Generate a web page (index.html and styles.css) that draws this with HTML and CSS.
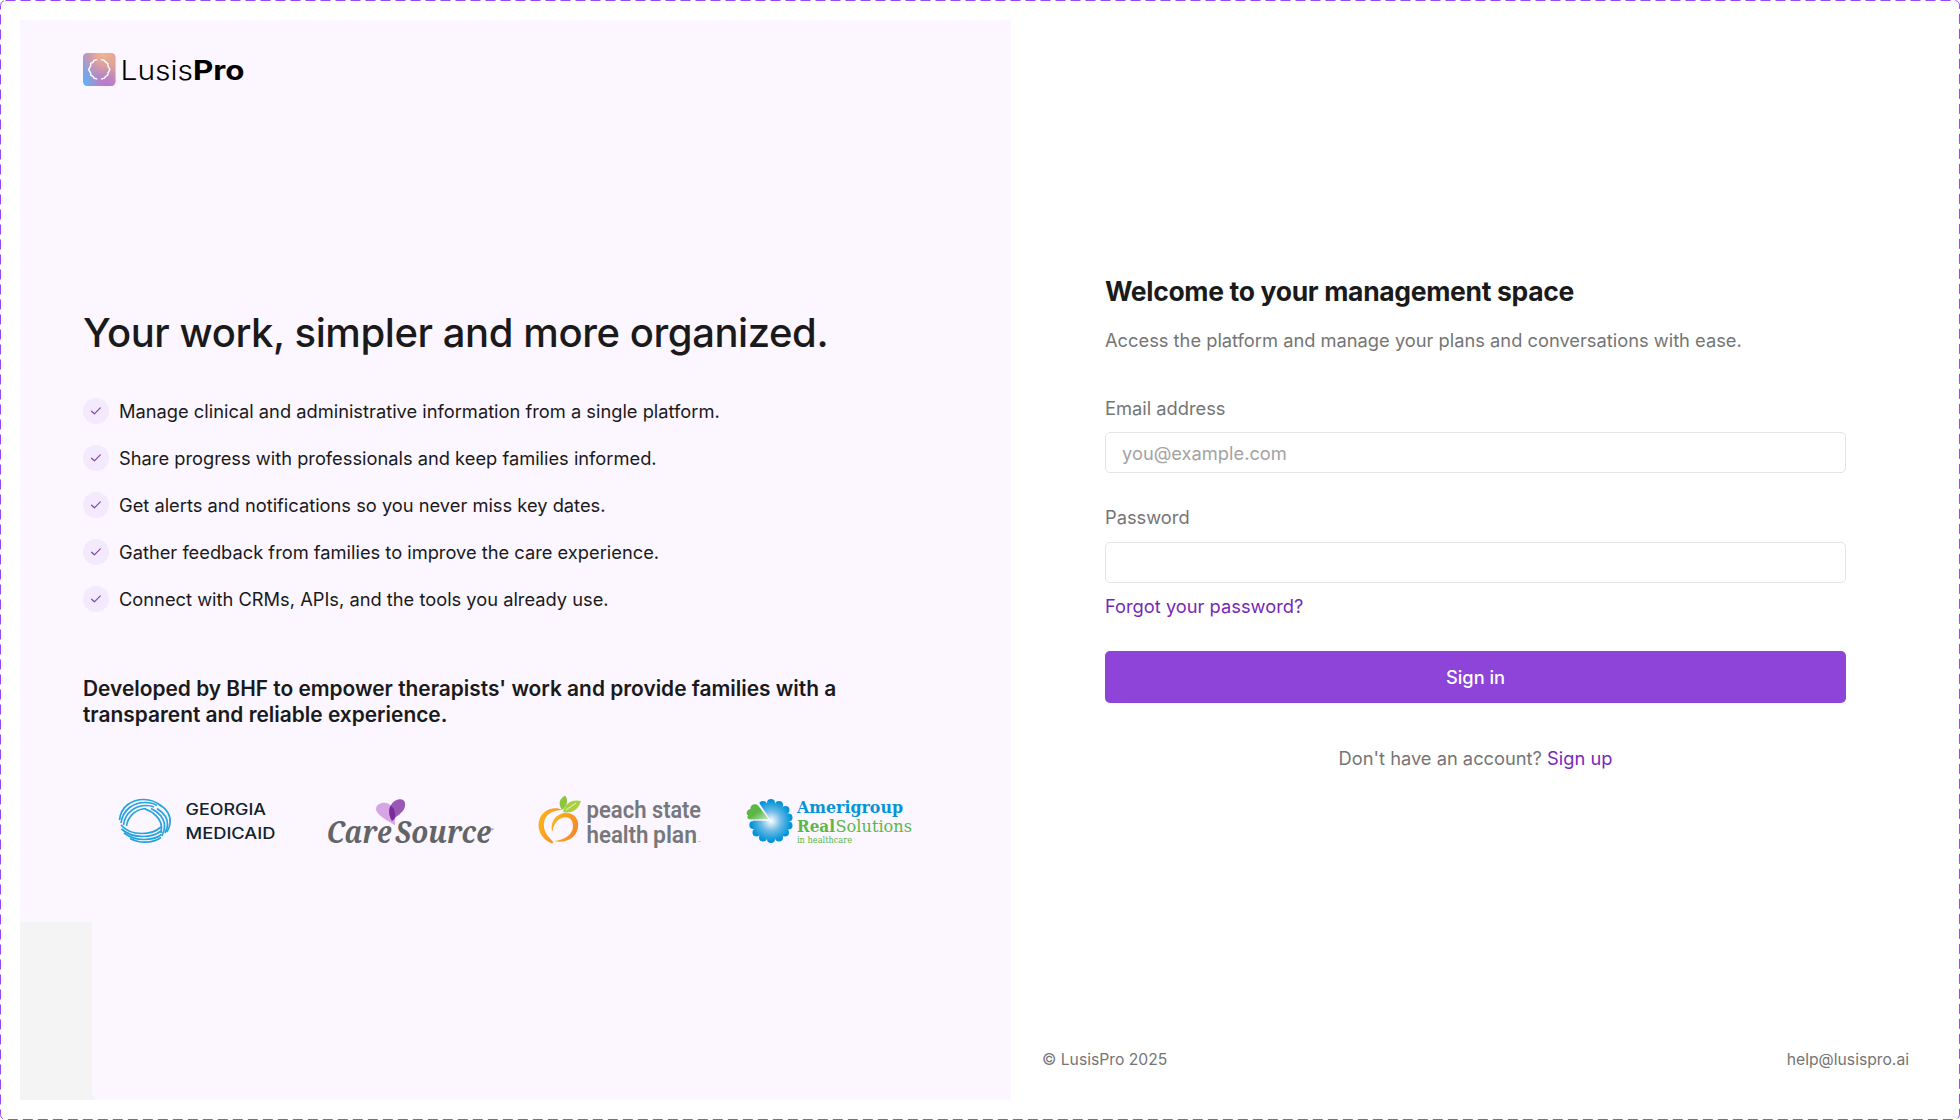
FILE: index.html
```html
<!DOCTYPE html>
<html lang="en">
<head>
  <meta charset="UTF-8">
  <meta name="viewport" content="width=device-width, initial-scale=1.0">
  <title>LusisPro - Sign in</title>
  <link rel="stylesheet" href="styles.css">
</head>
<body>
  <svg class="frame" width="1960" height="1120">
    <rect x="0.5" y="0.5" width="1959" height="1119" rx="5" />
  </svg>

  <div class="page">
    <section class="intro">
      <svg class="brand" width="164" height="34" viewBox="0 0 164 34" role="img" aria-label="LusisPro">
        <defs>
          <linearGradient id="brandBase" x1="0" y1="0.8" x2="1" y2="0.3">
            <stop offset="0" stop-color="#62aef5" />
            <stop offset="0.45" stop-color="#b78bc4" />
            <stop offset="1" stop-color="#dfa094" />
          </linearGradient>
          <radialGradient id="brandTop" cx="0.6" cy="0" r="0.75">
            <stop offset="0" stop-color="#f3b98d" />
            <stop offset="1" stop-color="#e6a392" stop-opacity="0" />
          </radialGradient>
          <radialGradient id="brandBottom" cx="0.75" cy="1" r="0.6">
            <stop offset="0" stop-color="#b878cf" />
            <stop offset="1" stop-color="#b878cf" stop-opacity="0" />
          </radialGradient>
        </defs>
        <rect y="0" width="32.5" height="33" rx="4.5" fill="url(#brandBase)" />
        <rect y="0" width="32.5" height="33" rx="4.5" fill="url(#brandTop)" />
        <rect y="0" width="32.5" height="33" rx="4.5" fill="url(#brandBottom)" />
        <path class="brand-ring" d="M14.3 6.6 L11 7.4 L10 9.2 L7.7 10.4 L7.6 13 L5.6 16.4 L7.6 20 L7.7 22 L10 23.4 L11 25.2 L14.3 26.2" />
        <path class="brand-ring" d="M18 6.6 L21.4 7.4 L22.6 9.2 L24.8 10.4 L25 13 L26.9 16.4 L25 20 L24.8 22 L22.6 23.4 L21.4 25.2 L18 26.2" />
        <text class="brand-light" x="37.5" y="27" textLength="72.5" lengthAdjust="spacingAndGlyphs">Lusis</text>
        <text class="brand-bold" x="110" y="27" textLength="51.5" lengthAdjust="spacingAndGlyphs">Pro</text>
      </svg>

      <h1>Your work, simpler and more organized.</h1>

      <ul class="features">
        <li><span class="check"><svg width="10" height="8" viewBox="0 0 10 8"><path d="M0.6 4.2 L3.4 6.8 L9.3 0.9" /></svg></span>Manage clinical and administrative information from a single platform.</li>
        <li><span class="check"><svg width="10" height="8" viewBox="0 0 10 8"><path d="M0.6 4.2 L3.4 6.8 L9.3 0.9" /></svg></span>Share progress with professionals and keep families informed.</li>
        <li><span class="check"><svg width="10" height="8" viewBox="0 0 10 8"><path d="M0.6 4.2 L3.4 6.8 L9.3 0.9" /></svg></span>Get alerts and notifications so you never miss key dates.</li>
        <li><span class="check"><svg width="10" height="8" viewBox="0 0 10 8"><path d="M0.6 4.2 L3.4 6.8 L9.3 0.9" /></svg></span>Gather feedback from families to improve the care experience.</li>
        <li><span class="check"><svg width="10" height="8" viewBox="0 0 10 8"><path d="M0.6 4.2 L3.4 6.8 L9.3 0.9" /></svg></span>Connect with CRMs, APIs, and the tools you already use.</li>
      </ul>

      <p class="developed">Developed by BHF to empower therapists' work and provide families with a transparent and reliable experience.</p>

      <div class="partners">
        <svg width="160" height="60" viewBox="0 0 160 60" role="img" aria-label="Georgia Medicaid">
          <g class="georgia-rings">
            <path d="M1.5 30 C3 16 14 9.5 26 9.5 C33 9.5 38 11.5 43 16" />
            <path d="M3 33 C5 19 16 12.5 27 12.5 C32 12.5 36 13.5 39 15.5" />
            <path d="M5.5 35 C7 22 18 15.5 28 15.5 C31 15.5 34 16 36 17" />
            <path d="M8.5 36 C10 25 19 19 28 18.5" />
            <path d="M27 19 C36 22 43 29 43.5 37 L43 43" />
            <path d="M33 18.5 C41 22 47 29 46.5 37 C46.5 40 45 43 44 46" />
            <path d="M39 18.5 C46 23 50 28 49.5 35 C49.5 38 48.5 40 47 43" />
            <path d="M42 15 C49 19 53 26 52 33 C51.5 37 50.5 40 48.5 42" />
            <path d="M3 35 C8 41 15 43.5 24 43.5 C32 43.5 38 41.5 43 37" />
            <path d="M3.5 39 C9 44 16 46.5 25 46.5 C33 46.5 38 45 43 41" />
            <path d="M6 43 C12 47.5 18 49.5 26 49.5 C34 49.5 39 48 43.5 44.5" />
            <path d="M12 48.5 C17 51 22 52.3 27 52.2 C34 52 39 50.5 43 47.5" />
          </g>
          <text class="georgia-text" x="67.5" y="25.3" textLength="80.5" lengthAdjust="spacingAndGlyphs">GEORGIA</text>
          <text class="georgia-text" x="67.5" y="49.3" textLength="90" lengthAdjust="spacingAndGlyphs">MEDICAID</text>
        </svg>

        <svg width="170" height="60" viewBox="0 0 170 60" role="img" aria-label="CareSource">
          <path d="M69 35 C64 32 50 25 50 19 C50 12 62 10 66 17 C68 21 69 29 69 35 Z" fill="#d5a6e2" />
          <path d="M66 31 C61 23 63 12 72 9.5 C79 7.5 81 14 77.5 20 C75 24 69 27 66 31 Z" fill="#9a58b5" />
          <path d="M66 31 C62.5 25 62.5 20 64.5 15.5 C69 18 70 25 68.5 29 Z" fill="#792d9b" />
          <text class="care-text" x="0.5" y="53.3" textLength="65" lengthAdjust="spacingAndGlyphs">Care</text>
          <text class="care-text" x="69" y="53.3" textLength="96" lengthAdjust="spacingAndGlyphs">Source</text>
          <text class="care-mark" x="165" y="41">®</text>
        </svg>

        <svg width="170" height="60" viewBox="0 0 170 60" role="img" aria-label="peach state health plan">
          <defs>
            <linearGradient id="peach" x1="0" y1="0" x2="1" y2="0.4">
              <stop offset="0" stop-color="#fdb916" />
              <stop offset="1" stop-color="#f58a2a" />
            </linearGradient>
          </defs>
          <path d="M24 20 C17 15 0.5 20 0.5 35 C0.5 44 7 51 14 53.5 L15.5 52 C9 46 5 40 6 33 C7 24 15 20 24 20 Z" fill="url(#peach)" />
          <path d="M14 41 C12 31 19 23 28 23 C37 23 41 30 40 37 C39 47 29 54 16 51 C26 50 35 45 35 36 C35 30 31 26.5 26 27.5 C20 28.5 16 33 14.5 41 Z" fill="url(#peach)" />
          <path d="M24 20 C20 14 21 9 27 5.5 C31 10 29 16 24 20 Z" fill="#8cc63f" />
          <path d="M25 22 C27 13 34 9 43 11 C40 20 34 24 25 22 Z" fill="#a9d13c" />
          <path class="leaf-vein" d="M28 20 L38 13" />
          <text class="peach-text" x="48.5" y="27.7" textLength="60" lengthAdjust="spacingAndGlyphs">peach</text>
          <text class="peach-text" x="114" y="27.7" textLength="49" lengthAdjust="spacingAndGlyphs">state</text>
          <text class="peach-text" x="48.5" y="53.3" textLength="62" lengthAdjust="spacingAndGlyphs">health</text>
          <text class="peach-text" x="115" y="53.3" textLength="44" lengthAdjust="spacingAndGlyphs">plan</text>
          <text class="peach-mark" x="160" y="53.5">™</text>
        </svg>

        <svg width="170" height="60" viewBox="0 0 170 60" role="img" aria-label="Amerigroup RealSolutions in healthcare">
          <defs>
            <radialGradient id="flower" gradientUnits="userSpaceOnUse" cx="24" cy="31" r="20">
              <stop offset="0" stop-color="#ffffff" />
              <stop offset="0.5" stop-color="#6fbbe6" />
              <stop offset="1" stop-color="#0495d8" />
            </radialGradient>
            <linearGradient id="petal" x1="0" y1="0" x2="1" y2="1">
              <stop offset="0.5" stop-color="#5cb747" />
              <stop offset="1" stop-color="#c5e6bd" />
            </linearGradient>
          </defs>
          <g fill="url(#flower)">
            <circle cx="24" cy="31" r="18" />
            <circle cx="24" cy="13" r="4" />
            <circle cx="32" cy="15" r="4" />
            <circle cx="38.5" cy="20" r="4" />
            <circle cx="41.5" cy="27.5" r="4" />
            <circle cx="41.5" cy="35.5" r="4" />
            <circle cx="38" cy="42.5" r="4" />
            <circle cx="32" cy="47.5" r="4" />
            <circle cx="24" cy="49" r="4" />
            <circle cx="16" cy="47.5" r="4" />
            <circle cx="9.5" cy="42.5" r="4" />
            <circle cx="6.3" cy="35" r="4" />
            <circle cx="16" cy="15" r="4" />
          </g>
          <path d="M24 31 L11.5 12 L-1 16 L-1 30.5 Z" fill="#fbf6ff" />
          <path d="M21.5 29 L11.5 16 C10 13 3 13.5 3.5 19 C-0.5 19.5 -1.5 24 1 25.5 C-0.5 28 1 29.5 4 29.5 Z" fill="url(#petal)" />
          <text class="ameri-text" x="50" y="23.3" textLength="106" lengthAdjust="spacingAndGlyphs">Amerigroup</text>
          <text class="real-text" x="50" y="41.7" textLength="38" lengthAdjust="spacingAndGlyphs">Real</text>
          <text class="solutions-text" x="88.5" y="41.7" textLength="76.5" lengthAdjust="spacingAndGlyphs">Solutions</text>
          <text class="health-text" x="50" y="52.7" textLength="55" lengthAdjust="spacingAndGlyphs">in healthcare</text>
        </svg>
      </div>

      <div class="corner"></div>
    </section>

    <section class="login">
      <form>
        <h2>Welcome to your management space</h2>
        <p class="subtitle">Access the platform and manage your plans and conversations with ease.</p>

        <label for="email">Email address</label>
        <input type="email" id="email" placeholder="you@example.com">

        <label for="password">Password</label>
        <input type="password" id="password">

        <a class="forgot" href="#">Forgot your password?</a>
        <button type="submit">Sign in</button>
        <p class="signup">Don't have an account? <a href="#">Sign up</a></p>
      </form>

      <footer>
        <span>© LusisPro 2025</span>
        <span>help@lusispro.ai</span>
      </footer>
    </section>
  </div>
</body>
</html>
```
FILE: styles.css
```css
* {
  box-sizing: border-box;
}

body {
  margin: 0;
  height: 1120px;
  padding: 20px;
  background-color: #fff;
  color: #1a1a1a;
  font-family: Inter, sans-serif;
  font-size: 18.3px;
  overflow: hidden;
}

/* dashed outline around the whole canvas */
.frame {
  position: absolute;
  top: 0;
  left: 0;
  pointer-events: none;
}

.frame rect {
  fill: none;
  stroke: #9747ff;
  stroke-width: 1;
  stroke-dasharray: 10 5;
}

.page {
  display: grid;
  grid-template-columns: 991px 1fr;
  height: 1080px;
}

/* left side */
.intro {
  position: relative;
  padding: 33px 63px 0;
  background-color: #fbf6ff;
}

.brand {
  display: block;
}

.brand-ring {
  fill: none;
  stroke: #fff;
  stroke-width: 1.4;
}

.brand-light,
.brand-bold {
  font-size: 27px;
  fill: #000;
}

.brand-light {
  font-weight: 300;
}

.brand-bold {
  font-weight: 700;
}

h1 {
  margin: 222px 0 0;
  font-size: 40px;
  line-height: 48px;
  font-weight: 500;
  letter-spacing: -0.42px;
  white-space: nowrap;
}

.features {
  margin: 41px 0 0;
  padding: 0;
  list-style: none;
  display: flex;
  flex-direction: column;
  gap: 21px;
}

.features li {
  display: flex;
  align-items: center;
  gap: 10px;
  height: 26px;
  white-space: nowrap;
}

.check {
  display: flex;
  align-items: center;
  justify-content: center;
  width: 26px;
  height: 26px;
  border-radius: 50%;
  background-color: #f3eafd;
}

.check path {
  fill: none;
  stroke: #8243b8;
  stroke-width: 1.2;
  stroke-linecap: round;
  stroke-linejoin: round;
}

.developed {
  margin: 64px 0 0;
  width: 780px;
  font-size: 20.9px;
  line-height: 26px;
  font-weight: 600;
}

.partners {
  display: flex;
  margin: 62px 0 0 35px;
}

.partners svg {
  overflow: visible;
  flex: none;
}

.partners svg:nth-child(1) {
  margin-right: 48px;
}

.partners svg:nth-child(2) {
  margin-right: 42px;
}

.partners svg:nth-child(3) {
  margin-right: 39px;
}

.georgia-rings {
  fill: none;
  stroke: #25a3dd;
  stroke-width: 1.7;
}

.georgia-text {
  font-size: 15.5px;
  font-weight: 500;
  fill: #10232b;
}

.care-text {
  font-family: "Noto Serif", "DejaVu Serif", serif;
  font-size: 31px;
  font-style: italic;
  font-weight: 700;
  fill: #636466;
}

.care-mark {
  font-size: 4px;
  fill: #636466;
}

.peach-text {
  font-family: Roboto, sans-serif;
  font-size: 24px;
  font-weight: 600;
  fill: #77787b;
}

.peach-mark {
  font-size: 4px;
  fill: #77787b;
}

.leaf-vein {
  fill: none;
  stroke: #fbf6ff;
  stroke-width: 0.8;
}

.ameri-text,
.real-text,
.solutions-text,
.health-text {
  font-family: "DejaVu Serif", serif;
}

.ameri-text {
  font-size: 16.5px;
  font-weight: 700;
  fill: #0495d8;
}

.real-text {
  font-size: 17px;
  font-weight: 700;
  fill: #5cb747;
}

.solutions-text {
  font-size: 17px;
  fill: #5cb747;
}

.health-text {
  font-size: 8.5px;
  fill: #5cb747;
}

.corner {
  position: absolute;
  left: 0;
  bottom: 0;
  width: 76px;
  height: 178px;
  background-color: #f4f4f4;
  clip-path: polygon(0 0, 72px 0, 72px 173px, 76px 100%, 0 100%);
}

/* right side */
.login {
  display: flex;
  flex-direction: column;
  justify-content: space-between;
  padding: 254px 31px 28px 32px;
}

form {
  display: flex;
  flex-direction: column;
  width: 741px;
  margin-left: 62px;
}

h2 {
  margin: 0;
  font-size: 26.5px;
  line-height: 34px;
  font-weight: 650;
  letter-spacing: -0.33px;
}

.subtitle {
  margin: 20px 0 0;
  line-height: 24px;
  color: #757575;
}

label {
  margin-top: 44px;
  line-height: 24px;
  color: #757575;
}

input {
  height: 41px;
  margin-top: 12px;
  padding: 1px 16px 0;
  border: 1px solid #e4e4e4;
  border-radius: 5px;
  font: inherit;
}

input::placeholder {
  color: #a3a3a3;
}

input + label {
  margin-top: 32px;
}

#password {
  margin-top: 13px;
}

a {
  color: #7629b8;
  text-decoration: none;
}

.forgot {
  align-self: flex-start;
  margin-top: 11px;
  line-height: 24px;
}

button {
  height: 52px;
  margin-top: 33px;
  border: none;
  border-radius: 5px;
  background-color: #8e44d8;
  color: #fff;
  font: 500 18.3px Inter, sans-serif;
}

.signup {
  margin: 43px 0 0;
  line-height: 24px;
  text-align: center;
  color: #757575;
}

footer {
  display: flex;
  justify-content: space-between;
  margin-left: -1px;
  font-size: 15.7px;
  line-height: 24px;
  color: #757575;
}
```
